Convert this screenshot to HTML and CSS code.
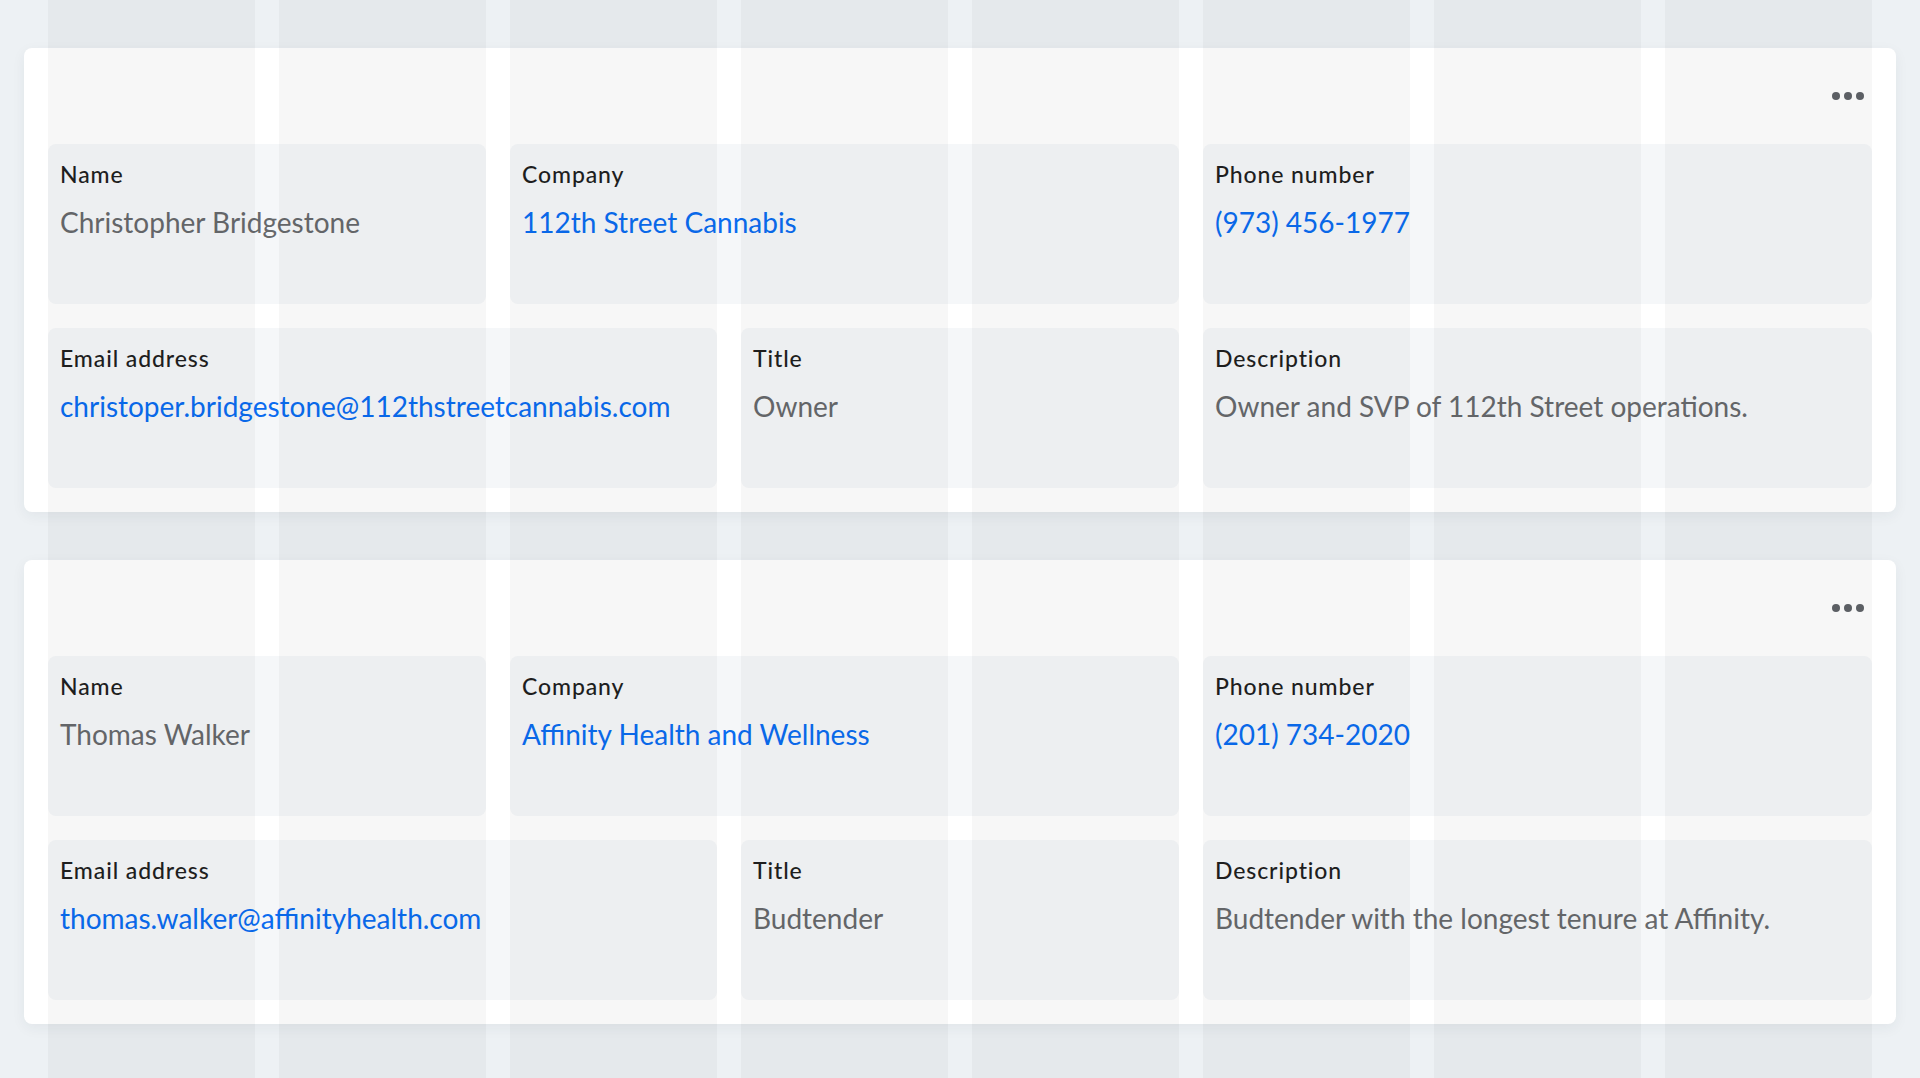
FILE: index.html
```html
<!DOCTYPE html>
<html lang="en">
<head>
<meta charset="utf-8">
<title>Contacts</title>
<link rel="stylesheet" href="styles.css">
</head>
<body>
<main class="page">
  <section class="card">
    <div class="card-head">
      <button class="more" type="button" aria-label="More options"><span></span><span></span><span></span></button>
    </div>
    <div class="fields">
      <div class="field span-name"><div class="label">Name</div><div class="value">Christopher Bridgestone</div></div>
      <div class="field span-company"><div class="label">Company</div><div class="value link">112th Street Cannabis</div></div>
      <div class="field span-phone"><div class="label">Phone number</div><div class="value link">(973) 456-1977</div></div>
      <div class="field span-email"><div class="label">Email address</div><div class="value link">christoper.bridgestone@112thstreetcannabis.com</div></div>
      <div class="field span-title"><div class="label">Title</div><div class="value">Owner</div></div>
      <div class="field span-desc"><div class="label">Description</div><div class="value">Owner and SVP of 112th Street operations.</div></div>
    </div>
  </section>
  <section class="card">
    <div class="card-head">
      <button class="more" type="button" aria-label="More options"><span></span><span></span><span></span></button>
    </div>
    <div class="fields">
      <div class="field span-name"><div class="label">Name</div><div class="value">Thomas Walker</div></div>
      <div class="field span-company"><div class="label">Company</div><div class="value link">Affinity Health and Wellness</div></div>
      <div class="field span-phone"><div class="label">Phone number</div><div class="value link">(201) 734-2020</div></div>
      <div class="field span-email"><div class="label">Email address</div><div class="value link">thomas.walker@affinityhealth.com</div></div>
      <div class="field span-title"><div class="label">Title</div><div class="value">Budtender</div></div>
      <div class="field span-desc"><div class="label">Description</div><div class="value">Budtender with the longest tenure at Affinity.</div></div>
    </div>
  </section>
</main>
<div class="grid-overlay" aria-hidden="true">
  <div></div><div></div><div></div><div></div><div></div><div></div><div></div><div></div>
</div>
</body>
</html>
```
FILE: styles.css
```css
* { box-sizing: border-box; }

html, body {
  margin: 0;
  padding: 0;
}

body {
  background: #edf1f4;
  font-family: Lato, "Liberation Sans", sans-serif;
  color: #1f1f1f;
  height: 1078px;
  overflow: hidden;
}

.page {
  padding: 48px 24px;
  display: flex;
  flex-direction: column;
  gap: 48px;
}

.card {
  background: #ffffff;
  border-radius: 8px;
  padding: 0 24px 24px;
  box-shadow: 0 4px 14px rgba(30, 45, 60, 0.06);
}

.card-head {
  height: 96px;
  display: flex;
  justify-content: flex-end;
  align-items: center;
}

.more {
  width: 48px;
  height: 48px;
  border: 0;
  padding: 0;
  background: transparent;
  display: flex;
  align-items: center;
  justify-content: center;
  gap: 4px;
  cursor: pointer;
}

.more span {
  width: 8px;
  height: 8px;
  border-radius: 50%;
  background: #5f6368;
}

.fields {
  display: grid;
  grid-template-columns: repeat(8, 1fr);
  column-gap: 24px;
  row-gap: 24px;
}

.field {
  background: #f5f7f9;
  border-radius: 8px;
  height: 160px;
  padding: 16px 12px;
}

.span-name { grid-column: 1 / 3; }
.span-company { grid-column: 3 / 6; }
.span-phone { grid-column: 6 / 9; }
.span-email { grid-column: 1 / 4; }
.span-title { grid-column: 4 / 6; }
.span-desc { grid-column: 6 / 9; }

.label {
  font-size: 23px;
  line-height: 28px;
  font-weight: 500;
  letter-spacing: 0.9px;
  color: #1f1f1f;
}

.value {
  margin-top: 16px;
  font-size: 28px;
  line-height: 36px;
  color: #67696c;
  white-space: nowrap;
}

.value.link {
  color: #0a6cf0;
}

.grid-overlay {
  position: fixed;
  inset: 0;
  padding: 0 48px;
  display: grid;
  grid-template-columns: repeat(8, 1fr);
  column-gap: 24px;
  pointer-events: none;
}

.grid-overlay div {
  background: rgba(0, 0, 0, 0.03);
}
```
